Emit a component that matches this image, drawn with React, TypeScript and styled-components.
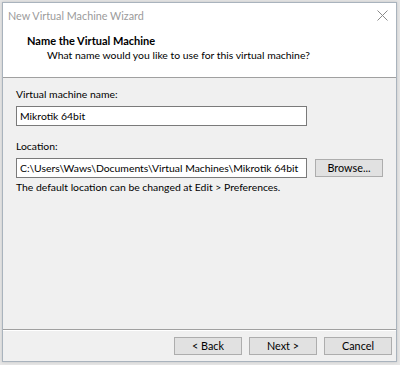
import React from "react";
import styled, { createGlobalStyle } from "styled-components";

const GlobalStyle = createGlobalStyle`
  html, body {
    margin: 0;
    padding: 0;
    background: #e6e6e6;
    font-family: Lato, "Liberation Sans", sans-serif;
    font-size: 10.4px;
    color: #000;
  }
`;

const Desktop = styled.div`
  width: 400px;
  height: 365px;
  padding: 2px 3px 3px 2px;
  box-sizing: border-box;
`;

const Window = styled.div`
  width: 395px;
  height: 360px;
  box-sizing: border-box;
  border: 1px solid #a9b3bd;
  background: #f0f0f0;
  display: flex;
  flex-direction: column;
  box-shadow: 0 0 3px rgba(0, 0, 0, 0.15);
`;

const TitleBar = styled.div`
  height: 25px;
  background: #fff;
  display: flex;
  align-items: center;
  justify-content: space-between;
  padding: 0 8px 0 5px;
  color: #9b9b9b;
  font-size: 10.8px;
`;

const CloseIcon = styled.svg`
  width: 11px;
  height: 11px;
`;

const Header = styled.div`
  background: #fff;
  height: 50px;
  box-sizing: border-box;
  padding: 5px 0 0 24px;
  border-bottom: 1px solid #a0a0a0;
  line-height: 15px;
`;

const HeaderTitle = styled.div`
  font-weight: bold;
  font-size: 11px;
`;

const HeaderSub = styled.div`
  padding-left: 20px;
  font-size: 10.4px;
`;

const Body = styled.div`
  flex: 1;
  padding: 8px 13px 0 13px;
  display: flex;
  flex-direction: column;
`;

const Label = styled.div<{ $top?: number }>`
  margin-top: ${(p) => p.$top ?? 0}px;
  line-height: 16px;
`;

const Row = styled.div`
  display: flex;
  align-items: center;
  gap: 8px;
  margin-top: 4px;
`;

const TextInput = styled.div`
  width: 291px;
  height: 20px;
  box-sizing: border-box;
  background: #fff;
  border: 1px solid #7a7a7a;
  padding: 0 3px;
  display: flex;
  align-items: center;
  white-space: nowrap;
  overflow: hidden;
`;

const Button = styled.button`
  width: 68px;
  height: 18px;
  box-sizing: border-box;
  background: #e1e1e1;
  border: 1px solid #adadad;
  padding: 0;
  font-family: inherit;
  font-size: 10.8px;
  color: #000;
  line-height: 16px;
`;

const Hint = styled.div`
  margin-top: 1px;
  line-height: 16px;
`;

const Footer = styled.div`
  height: 31px;
  border-top: 1px solid #a0a0a0;
  box-shadow: inset 0 1px 0 #fff;
  display: flex;
  justify-content: flex-end;
  align-items: center;
  gap: 7px;
  padding: 0 4px 0 0;
`;

export default function App() {
  return (
    <>
      <GlobalStyle />
      <Desktop>
        <Window>
          <TitleBar>
            <span>New Virtual Machine Wizard</span>
            <CloseIcon viewBox="0 0 11 11">
              <path d="M0.5 0.5 L10.5 10.5 M10.5 0.5 L0.5 10.5" stroke="#8a8a8a" strokeWidth="1" />
            </CloseIcon>
          </TitleBar>
          <Header>
            <HeaderTitle>Name the Virtual Machine</HeaderTitle>
            <HeaderSub>What name would you like to use for this virtual machine?</HeaderSub>
          </Header>
          <Body>
            <Label>Virtual machine name:</Label>
            <Row>
              <TextInput>Mikrotik 64bit</TextInput>
            </Row>
            <Label $top={12}>Location:</Label>
            <Row>
              <TextInput>C:\Users\Waws\Documents\Virtual Machines\Mikrotik 64bit</TextInput>
              <Button>Browse...</Button>
            </Row>
            <Hint>The default location can be changed at Edit &gt; Preferences.</Hint>
          </Body>
          <Footer>
            <Button>&lt; Back</Button>
            <Button>Next &gt;</Button>
            <Button>Cancel</Button>
          </Footer>
        </Window>
      </Desktop>
    </>
  );
}
